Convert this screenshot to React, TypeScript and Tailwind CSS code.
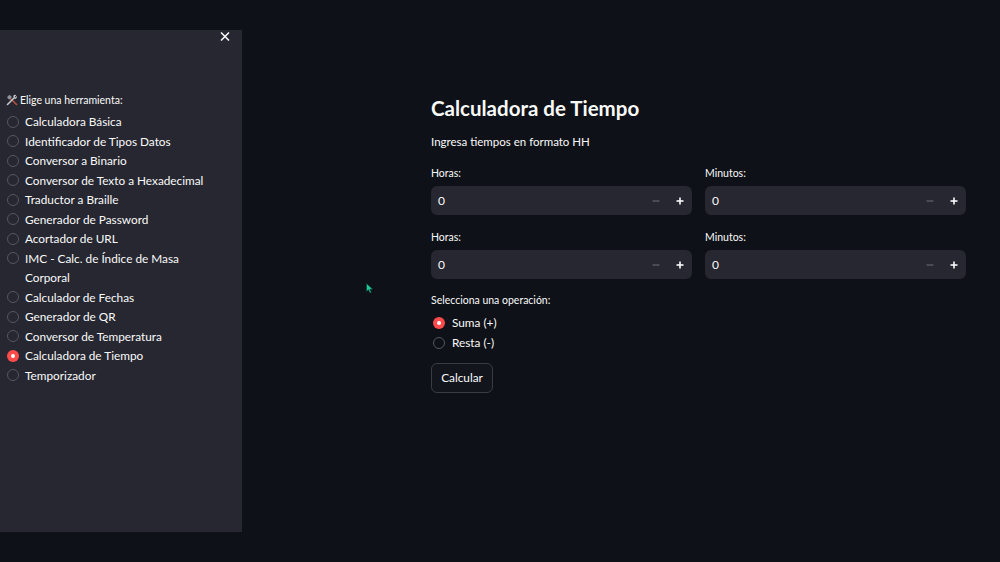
import React from "react";

const tools = [
  "Calculadora Básica",
  "Identificador de Tipos Datos",
  "Conversor a Binario",
  "Conversor de Texto a Hexadecimal",
  "Traductor a Braille",
  "Generador de Password",
  "Acortador de URL",
  "IMC - Calc. de Índice de Masa Corporal",
  "Calculador de Fechas",
  "Generador de QR",
  "Conversor de Temperatura",
  "Calculadora de Tiempo",
  "Temporizador",
];

function Radio({ checked }: { checked: boolean }) {
  return checked ? (
    <span className="w-[12px] h-[12px] rounded-full bg-[#ff4b4b] flex items-center justify-center shrink-0">
      <span className="w-[4px] h-[4px] rounded-full bg-white" />
    </span>
  ) : (
    <span className="w-[12px] h-[12px] rounded-full border border-[#55575e] shrink-0" />
  );
}

function NumberInput() {
  return (
    <div className="h-[29px] rounded-[6px] bg-[#262730] flex items-center">
      <span className="flex-1 pl-[7px] text-[12px] text-[#fafafa]">0</span>
      <span className="w-[24px] h-full flex items-center justify-center">
        <svg width="8" height="8" viewBox="0 0 8 8">
          <line x1="0.5" y1="4" x2="7.5" y2="4" stroke="#5d5f66" strokeWidth="1.3" />
        </svg>
      </span>
      <span className="w-[24px] h-full flex items-center justify-center">
        <svg width="8" height="8" viewBox="0 0 8 8">
          <line x1="0.5" y1="4" x2="7.5" y2="4" stroke="#fafafa" strokeWidth="1.6" />
          <line x1="4" y1="0.5" x2="4" y2="7.5" stroke="#fafafa" strokeWidth="1.6" />
        </svg>
      </span>
    </div>
  );
}

function Field({ label }: { label: string }) {
  return (
    <div className="flex flex-col">
      <div className="text-[10.5px] leading-[14px] text-[#fafafa] mb-[6px]">{label}</div>
      <NumberInput />
    </div>
  );
}

export default function App() {
  return (
    <div className="relative w-[1000px] h-[562px] bg-[#0e1117] font-[Lato,sans-serif] text-[#fafafa] flex overflow-hidden">
      {/* Sidebar */}
      <div className="mt-[30px] w-[242px] h-[502px] bg-[#262730] relative pt-[63px] pl-[7px]">
        <svg className="absolute left-[220px] top-[2px]" width="10" height="9" viewBox="0 0 10 9">
          <line x1="1" y1="0.5" x2="9" y2="8.5" stroke="#fafafa" strokeWidth="1.5" />
          <line x1="9" y1="0.5" x2="1" y2="8.5" stroke="#fafafa" strokeWidth="1.5" />
        </svg>
        <div className="flex items-center gap-[2px] text-[10.5px] leading-[14px]">
          <svg width="12" height="12" viewBox="0 0 12 12" className="-ml-[1px]">
            {/* hammer handle */}
            <line x1="4" y1="4" x2="10.5" y2="10.5" stroke="#b5523a" strokeWidth="1.6" strokeLinecap="round" />
            {/* hammer head */}
            <path d="M1 3.2 L3.4 0.8 L6 3 L3.2 5.8 Z" fill="#8f959d" />
            {/* wrench */}
            <line x1="1.5" y1="10.5" x2="8" y2="4" stroke="#c2c7cd" strokeWidth="1.6" strokeLinecap="round" />
            <path d="M7.2 2.2 A2.3 2.3 0 0 1 10.3 1.2 L8.8 2.7 L9.3 3.5 L10.8 2 A2.3 2.3 0 0 1 8.8 5.1 Z" fill="#c2c7cd" />
          </svg>
          <span>Elige una herramienta:</span>
        </div>
        <div className="mt-[5px] flex flex-col">
          {tools.map((t) => (
            <div key={t} className="flex items-start gap-[6px] text-[11.8px] leading-[19.5px]">
              <span className="h-[19.5px] flex items-center">
                <Radio checked={t === "Calculadora de Tiempo"} />
              </span>
              <span className="w-[190px]">{t}</span>
            </div>
          ))}
        </div>
      </div>

      {/* Main */}
      <div className="flex-1 pl-[189px] pt-[94px]">
        <div className="w-[535px] flex flex-col">
          <h1 className="text-[20.5px] leading-[28px] font-bold">Calculadora de Tiempo</h1>
          <p className="mt-[11px] text-[11.5px] leading-[18px]">Ingresa tiempos en formato HH</p>
          <div className="mt-[15px] grid grid-cols-2 gap-x-[13px] gap-y-[15px]">
            <Field label="Horas:" />
            <Field label="Minutos:" />
            <Field label="Horas:" />
            <Field label="Minutos:" />
          </div>
          <div className="mt-[14px] text-[10.5px] leading-[14px]">Selecciona una operación:</div>
          <div className="mt-[6px] flex flex-col pl-[2px]">
            <div className="flex items-center gap-[7px] h-[20px] text-[11.8px]">
              <Radio checked={true} />
              <span>Suma (+)</span>
            </div>
            <div className="flex items-center gap-[7px] h-[20px] text-[11.8px]">
              <Radio checked={false} />
              <span>Resta (-)</span>
            </div>
          </div>
          <div className="mt-[10px]">
            <button className="h-[30px] w-[62px] rounded-[6px] border border-[#3b3d44] bg-[#12151c] text-[11.8px] text-[#fafafa]">
              Calcular
            </button>
          </div>
        </div>
      </div>

      {/* Cursor */}
      <svg className="absolute left-[366px] top-[283px]" width="8" height="11" viewBox="0 0 8 11">
        <path d="M0.5 0.5 L0.5 8.5 L2.5 6.8 L4 10 L5.3 9.4 L3.9 6.3 L6.8 6.3 Z" fill="#1fc99a" stroke="#0b3b2e" strokeWidth="0.6" />
      </svg>
    </div>
  );
}
